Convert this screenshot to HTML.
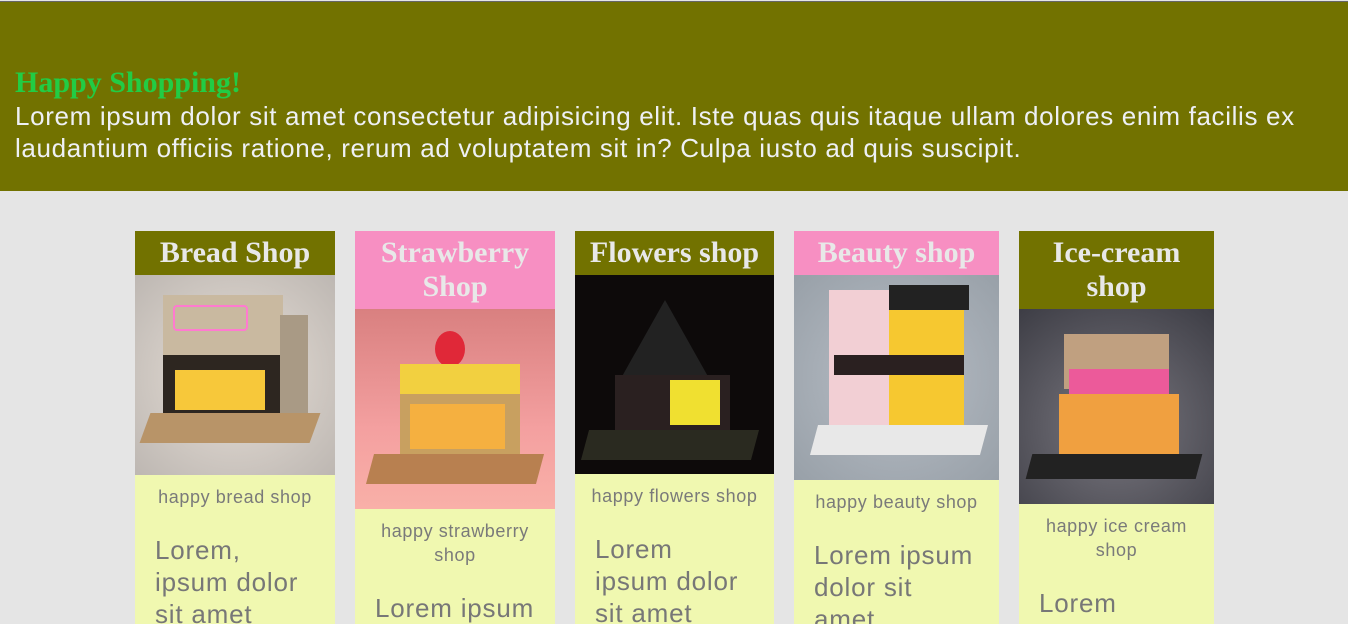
<!DOCTYPE html>
<html><head><meta charset="utf-8"><style>
*{margin:0;padding:0;box-sizing:border-box}
body{width:1348px;height:624px;overflow:hidden;background:#e5e5e5;font-family:"Liberation Sans",sans-serif}
header{position:absolute;left:0;top:1px;width:1348px;height:190px;background:#727200;border-top:1px solid #666}
header h1{position:absolute;left:15px;top:65px;font:bold 30px/32px "Liberation Serif",serif;color:#22cc44}
header p{position:absolute;left:15px;top:98px;font-size:26px;line-height:32px;color:#eef0f4;white-space:nowrap;letter-spacing:0.65px}
.card{position:absolute;top:231px;height:393px;background:#f0f8b0;overflow:hidden}
.t{font:bold 30px/34px "Liberation Serif",serif;color:#e8e8e8;text-align:center;padding:5px 0}
.o{background:#727200}.pk{background:#f78fc2}
.img{position:relative;overflow:hidden}
.cap{margin-top:10px;font-size:18px;line-height:24px;color:#7a7a7a;text-align:center;letter-spacing:0.6px}
.par{margin-top:25px;padding-left:20px;font-size:26px;line-height:32px;color:#777;white-space:nowrap;letter-spacing:0.8px}
.b{position:absolute}
</style></head><body>
<header><h1>Happy Shopping!</h1><p>Lorem ipsum dolor sit amet consectetur adipisicing elit. Iste quas quis itaque ullam dolores enim facilis ex<br>laudantium officiis ratione, rerum ad voluptatem sit in? Culpa iusto ad quis suscipit.</p></header>

<div class="card" style="left:135px;width:200px">
<div class="t o">Bread Shop</div>
<div class="img" style="height:200px;background:radial-gradient(circle at 50% 50%,#e8e0d8,#bdb7b2)">
<div class="b" style="left:28px;top:20px;width:120px;height:70px;background:#c9b9a0"></div>
<div class="b" style="left:38px;top:30px;width:75px;height:26px;border:2px solid #ff7ad0;border-radius:4px"></div>
<div class="b" style="left:28px;top:80px;width:120px;height:60px;background:#2d2620"></div>
<div class="b" style="left:40px;top:95px;width:90px;height:40px;background:#f7c83a"></div>
<div class="b" style="left:145px;top:40px;width:28px;height:100px;background:#a99a85"></div>
<div class="b" style="left:10px;top:138px;width:170px;height:30px;background:#b89468;transform:skewX(-20deg)"></div>
</div>
<div class="cap">happy bread shop</div>
<div class="par">Lorem,<br>ipsum dolor<br>sit amet</div>
</div>

<div class="card" style="left:355px;width:200px">
<div class="t pk">Strawberry<br>Shop</div>
<div class="img" style="height:200px;background:linear-gradient(180deg,#d98080,#f4a0a0 60%,#f9b0a8)">
<div class="b" style="left:80px;top:22px;width:30px;height:36px;background:#e02838;border-radius:50%"></div>
<div class="b" style="left:45px;top:55px;width:120px;height:30px;background:#f2d040"></div>
<div class="b" style="left:45px;top:85px;width:120px;height:60px;background:#c8a060"></div>
<div class="b" style="left:55px;top:95px;width:95px;height:45px;background:#f5b040"></div>
<div class="b" style="left:15px;top:145px;width:170px;height:30px;background:#b88050;transform:skewX(-15deg)"></div>
</div>
<div class="cap">happy strawberry<br>shop</div>
<div class="par">Lorem ipsum</div>
</div>

<div class="card" style="left:575px;width:199px">
<div class="t o">Flowers shop</div>
<div class="img" style="height:199px;background:#0d0a0a">
<div class="b" style="left:45px;top:25px;width:90px;height:80px;background:#222;clip-path:polygon(50% 0,100% 100%,0 100%);"></div>
<div class="b" style="left:40px;top:100px;width:115px;height:60px;background:#2a2020"></div>
<div class="b" style="left:95px;top:105px;width:50px;height:45px;background:#f0e030"></div>
<div class="b" style="left:10px;top:155px;width:170px;height:30px;background:#2a2a20;transform:skewX(-15deg)"></div>
</div>
<div class="cap">happy flowers shop</div>
<div class="par">Lorem<br>ipsum dolor<br>sit amet</div>
</div>

<div class="card" style="left:794px;width:205px">
<div class="t pk">Beauty shop</div>
<div class="img" style="height:205px;background:radial-gradient(circle at 50% 50%,#b8bec6,#98a0a8)">
<div class="b" style="left:35px;top:15px;width:65px;height:140px;background:#f2cfd4"></div>
<div class="b" style="left:95px;top:15px;width:75px;height:140px;background:#f6c830"></div>
<div class="b" style="left:95px;top:10px;width:80px;height:25px;background:#222"></div>
<div class="b" style="left:40px;top:80px;width:130px;height:20px;background:#2a2020"></div>
<div class="b" style="left:20px;top:150px;width:170px;height:30px;background:#e8e8e8;transform:skewX(-15deg)"></div>
</div>
<div class="cap">happy beauty shop</div>
<div class="par">Lorem ipsum<br>dolor sit<br>amet</div>
</div>

<div class="card" style="left:1019px;width:195px">
<div class="t o">Ice-cream<br>shop</div>
<div class="img" style="height:195px;background:radial-gradient(circle at 50% 60%,#7a7880,#3d3d45)">
<div class="b" style="left:45px;top:25px;width:105px;height:55px;background:#c0a080"></div>
<div class="b" style="left:50px;top:60px;width:100px;height:25px;background:#ec5a9a"></div>
<div class="b" style="left:40px;top:85px;width:120px;height:60px;background:#f0a040"></div>
<div class="b" style="left:10px;top:145px;width:170px;height:25px;background:#222;transform:skewX(-15deg)"></div>
</div>
<div class="cap">happy ice cream<br>shop</div>
<div class="par">Lorem<br>ipsum dolor</div>
</div>
</body></html>
